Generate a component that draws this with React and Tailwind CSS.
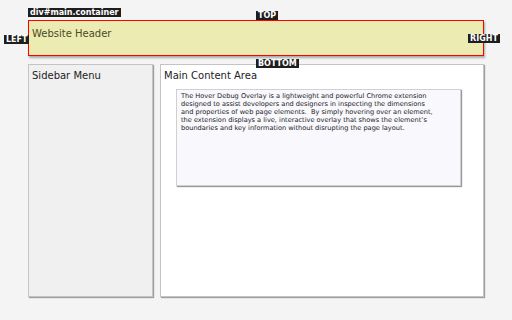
import React from "react";

const lines = [
  "The Hover Debug Overlay is a lightweight and powerful Chrome extension",
  "designed to assist developers and designers in inspecting the dimensions",
  "and properties of web page elements.  By simply hovering over an element,",
  "the extension displays a live, interactive overlay that shows the element\u2019s",
  "boundaries and key information without disrupting the page layout.",
];

const Tag = ({ className, children }) => (
  <div
    className={`absolute bg-[#1e1e1e] text-white font-bold text-[8px] leading-[9px] px-[2px] whitespace-nowrap ${className}`}
  >
    {children}
  </div>
);

const App = () => {
  return (
    <div
      className="relative w-[512px] h-[320px] bg-[#f4f4f4] overflow-hidden"
      style={{ fontFamily: '"DejaVu Sans", Verdana, sans-serif' }}
    >
      <div className="w-[456px] ml-[28px] pt-[20px]">
        {/* header */}
        <div className="h-[36px] border border-[#ff0000] bg-[#ececb2] shadow-[1px_2px_2px_rgba(0,0,0,0.3)] px-[3px] pt-[7px] text-[10px] leading-[12px] text-[#4a4a26]">
          Website Header
        </div>

        <div className="mt-[8px] flex gap-[7px] h-[233px]">
          <div className="w-[125px] bg-[#f0f0f0] border border-[#c4c4c4] shadow-[1px_1px_1px_rgba(0,0,0,0.35)] px-[3px] pt-[5px]">
            <div className="text-[10px] leading-[12px] text-[#222]">Sidebar Menu</div>
          </div>

          <div className="flex-1 bg-white border border-[#c4c4c4] shadow-[1px_1px_1px_rgba(0,0,0,0.35)] px-[3px] pt-[5px]">
            <div className="text-[10px] leading-[12px] text-[#222]">Main Content Area</div>
            <div className="mt-[7px] ml-[12px] w-[285px] h-[97px] bg-[#f8f8fd] border border-[#d0d0d0] shadow-[1px_1px_1px_rgba(0,0,0,0.4)] px-[4px] pt-[2px]">
              {lines.map((l, i) => (
                <div key={i} className="text-[6.6px] leading-[8px] text-[#222] whitespace-pre">
                  {l}
                </div>
              ))}
            </div>
          </div>
        </div>
      </div>

      {/* debug labels */}
      <Tag className="left-[28px] top-[8px]">div#main.container</Tag>
      <Tag className="left-[256px] top-[11px]">TOP</Tag>
      <Tag className="left-[256px] top-[59px]">BOTTOM</Tag>
      <Tag className="left-[4px] top-[35px]">LEFT</Tag>
      <Tag className="left-[468px] top-[34px]">RIGHT</Tag>
    </div>
  );
};

export default App;
